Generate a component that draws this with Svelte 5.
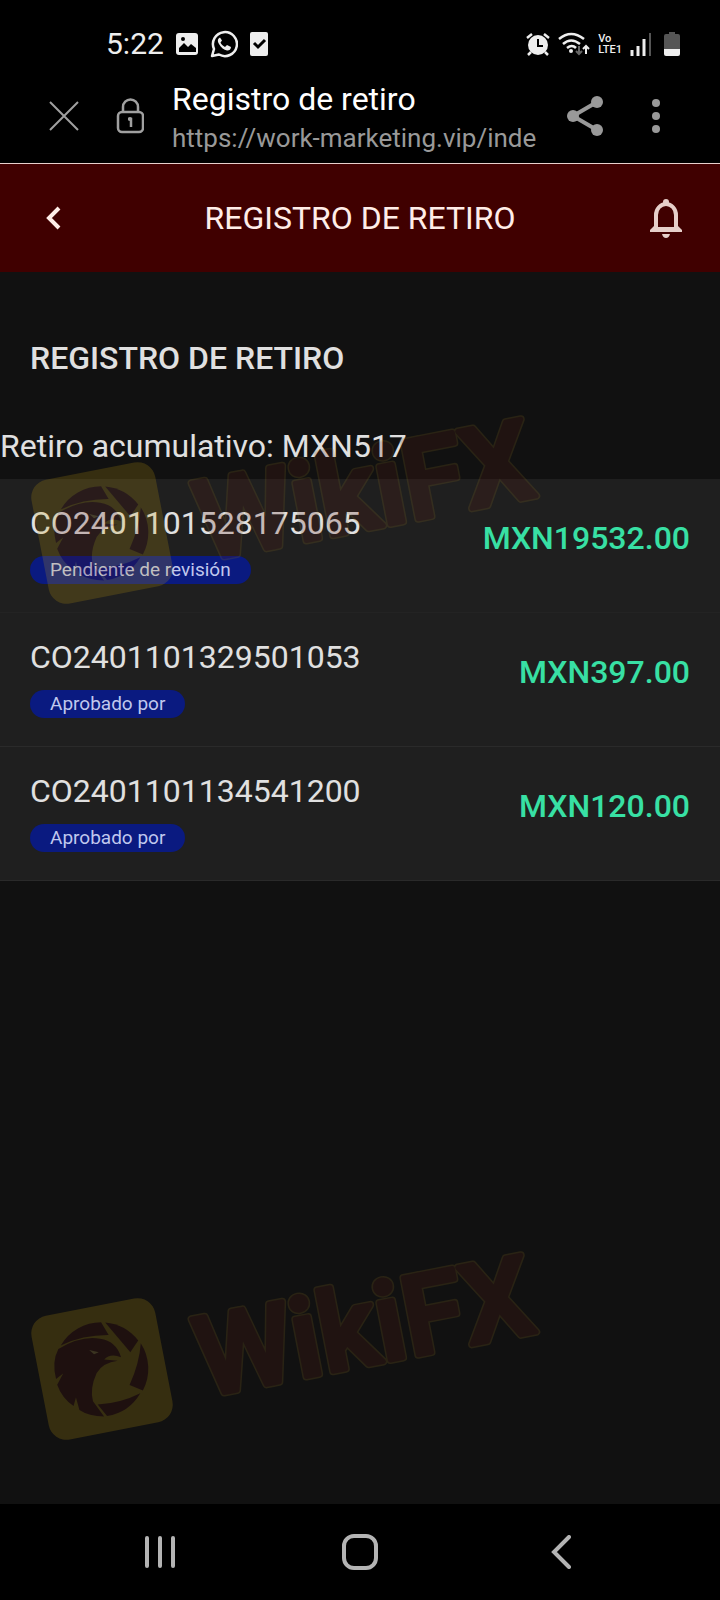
<script>
	const records = [
		{ id: 'CO2401101528175065', status: 'Pendiente de revisión', amount: 'MXN19532.00' },
		{ id: 'CO2401101329501053', status: 'Aprobado por', amount: 'MXN397.00' },
		{ id: 'CO2401101134541200', status: 'Aprobado por', amount: 'MXN120.00' }
	];
	const total = 'MXN517';
</script>

<svelte:head>
	<title>Registro de retiro</title>
</svelte:head>

{#snippet watermark(place)}
	<svg class="watermark {place}" viewBox="0 -40 600 280" aria-hidden="true">
		<g transform="rotate(-11 102 139)">
			<rect x="39" y="76" width="126" height="126" rx="18" fill="#c8a010" />
			<!-- shutter blades around the eagle -->
			<g fill="#52100c">
				<path d="M66 108 A47 47 0 0 1 110 93 L115 107 Q90 102 66 108Z" />
				<path d="M114 94 A47 47 0 0 1 143 118 L133 128Z" />
				<path d="M145 121 A47 47 0 0 1 138 168 L126 160 Q140 140 145 121Z" />
				<path d="M135 170 A47 47 0 0 1 98 186 L91 173 Q114 176 135 170Z" />
				<path d="M63 111 Q88 102 106 109 Q121 114 123 131 Q113 125 106 130 L119 134 Q104 133 96 142 Q86 156 87 169 L95 186 Q80 183 72 175 L71 162 L67 170 Q57 160 55 146 L63 136 L55 140 Q54 122 63 111Z" />
			</g>
			<path d="M93 118 l9 4 -5 1z" fill="#e0c060" />
		</g>
		<g transform="rotate(-11 206 166)">
			<text class="edge" x="204" y="166">WikiFX</text>
			<text x="204" y="166">WikiFX</text>
		</g>
	</svg>
{/snippet}

<div class="page">
	<div class="status">
		<time>5:22</time>
		<svg width="22" height="24" viewBox="0 0 22 24">
			<rect y="1" width="22" height="22" rx="3" fill="#eee" />
			<path d="M3 20v-4l5-5 4 4 3-3 5 4v4z" fill="#000" />
			<circle cx="7" cy="7" r="2" fill="#000" />
		</svg>
		<svg width="28" height="28" viewBox="0 0 28 28">
			<path d="M2 26l2-7A12 12 0 1 1 9 24.500z" fill="none" stroke="#eee" stroke-width="2.500" stroke-linejoin="round" />
			<path d="M10 7.500c-2 1-3 3-1 6.500 2 3.500 5 6 8 6.500 2 .2 4-1 4-3.500l-4-2-2 2c-2-1-4-3-4.500-4.500l1.500-2z" fill="#eee" />
		</svg>
		<svg width="18" height="24" viewBox="0 0 18 24">
			<rect width="18" height="24" rx="2" fill="#eee" />
			<path d="M4 11l4 4 7-7" fill="none" stroke="#000" stroke-width="3" />
		</svg>
		<div class="system">
			<svg width="24" height="24" viewBox="0 0 24 24">
				<circle cx="12" cy="13" r="10" fill="#eee" />
				<path d="M1 6l5-4M23 6l-5-4M5 20l-3 3M19 20l3 3" stroke="#eee" stroke-width="2.500" />
				<path d="M12 7v7h5" fill="none" stroke="#000" stroke-width="2" />
			</svg>
			<svg width="32" height="24" viewBox="0 0 32 24">
				<g fill="none" stroke="#eee" stroke-width="2.500">
					<path d="M1 7q12-10 25 0M5 12q8-7 17 0M9 16q5-4 9 0" />
					<path d="M28 22v-8M25 17l3-3 3 3" stroke-width="2" />
				</g>
				<path d="M21 14v8M18 19l3 3 3-3" fill="none" stroke="#666" stroke-width="2" />
				<circle cx="13" cy="19" r="2" fill="#eee" />
			</svg>
			<span class="volte">Vo<br />LTE1</span>
			<svg width="22" height="24" viewBox="0 0 22 24">
				<path d="M2 18v6M8 14v10M14 7v17" stroke="#eee" stroke-width="3" />
				<path d="M20 1v23" stroke="#555" stroke-width="2" />
			</svg>
			<svg class="battery" width="16" height="24" viewBox="0 0 16 24">
				<path d="M2 2h3V0h6v2h3q2 0 2 2v13H0V4q0-2 2-2z" fill="#555" />
				<path d="M0 17h16v5q0 2-2 2H2q-2 0-2-2z" fill="#eee" />
			</svg>
		</div>
	</div>

	<div class="browser">
		<button aria-label="Cerrar">
			<svg width="32" height="32" viewBox="0 0 32 32">
				<path d="M2 2l28 28M30 2L2 30" stroke="#a0a0a0" stroke-width="2" />
			</svg>
		</button>
		<button class="lock" aria-label="Seguridad">
			<svg width="28" height="36" viewBox="0 0 28 36">
				<g fill="none" stroke="#a0a0a0" stroke-width="2.500">
					<rect x="2" y="14" width="25" height="20" rx="4" />
					<path d="M7 14V9a7.500 7.500 0 0 1 15 0v5" />
					<path d="M12 21h3v8" />
				</g>
				<circle cx="14" cy="21" r="2" fill="#a0a0a0" />
			</svg>
		</button>
		<div class="address">
			<div class="name">Registro de retiro</div>
			<div class="url">https://work-marketing.vip/inde</div>
		</div>
		<button class="share" aria-label="Compartir">
			<svg width="36" height="40" viewBox="0 0 36 40">
				<path d="M30 6L6 20l24 14" fill="none" stroke="#999" stroke-width="4" />
				<g fill="#999">
					<circle cx="30" cy="6" r="6" />
					<circle cx="6" cy="20" r="6" />
					<circle cx="30" cy="34" r="6" />
				</g>
			</svg>
		</button>
		<button class="more" aria-label="Más opciones">
			<svg width="10" height="36" viewBox="0 0 10 36" fill="#999">
				<circle cx="5" cy="5" r="4" />
				<circle cx="5" cy="18" r="4" />
				<circle cx="5" cy="31" r="4" />
			</svg>
		</button>
	</div>

	<header>
		<button class="back" aria-label="Volver">
			<svg width="16" height="24" viewBox="0 0 16 24">
				<path d="M13 2L3 12l10 10" fill="none" stroke="#ffede8" stroke-width="4" />
			</svg>
		</button>
		<h1>REGISTRO DE RETIRO</h1>
		<button aria-label="Notificaciones">
			<svg width="32" height="40" viewBox="0 0 32 40">
				<g fill="#e6cfca">
					<circle cx="16" cy="4" r="3" />
					<path d="M12 36h8q-1 4-4 4t-4-4z" />
					<path d="M0 34v-2l4-4h24l4 4v2z" />
				</g>
				<path d="M6 31V17a10 11 0 0 1 20 0v14z" fill="#400000" stroke="#e6cfca" stroke-width="4" />
			</svg>
		</button>
	</header>

	<main>
		<h2>REGISTRO DE RETIRO</h2>
		<p>Retiro acumulativo: {total}</p>
		<ul>
			{#each records as record}
				<li>
					<div class="info">
						<span class="id">{record.id}</span>
						<span class="tag">{record.status}</span>
					</div>
					<strong>{record.amount}</strong>
				</li>
			{/each}
		</ul>
	</main>

	<nav>
		<button aria-label="Recientes">
			<svg width="32" height="32" viewBox="0 0 32 32">
				<path d="M3 2v28M16 2v28M29 2v28" stroke="#b4b4b4" stroke-width="4" stroke-linecap="round" />
			</svg>
		</button>
		<button aria-label="Inicio">
			<svg width="36" height="36" viewBox="0 0 36 36">
				<rect x="2" y="2" width="32" height="32" rx="10" fill="none" stroke="#b4b4b4" stroke-width="4" />
			</svg>
		</button>
		<button aria-label="Atrás">
			<svg width="20" height="34" viewBox="0 0 20 34">
				<path d="M18 2L3 17l15 15" fill="none" stroke="#b4b4b4" stroke-width="4" stroke-linecap="round" />
			</svg>
		</button>
	</nav>

	{@render watermark('upper')}
	{@render watermark('lower')}
</div>

<style>
	:global(body) {
		margin: 0;
		background: #000;
	}
	.page {
		position: relative;
		display: flex;
		flex-direction: column;
		min-height: 100vh;
		background: #111;
		color: #e0e0e0;
		font-family: Roboto, sans-serif;
		font-size: 32px;
		line-height: 40px;
	}
	svg {
		display: block;
		flex: none;
	}
	button {
		padding: 0;
		border: 0;
		background: none;
		cursor: pointer;
	}
	.status {
		display: flex;
		align-items: center;
		gap: 12px;
		height: 72px;
		padding: 16px 40px 0 106px;
		box-sizing: border-box;
		background: #000;
		color: #eee;
	}
	time {
		font-size: 30px;
	}
	.system {
		display: flex;
		align-items: center;
		gap: 8px;
		margin-left: auto;
	}
	.volte {
		font-size: 11px;
		font-weight: 500;
		line-height: 11px;
	}
	.battery {
		margin-left: 4px;
	}
	.browser {
		display: flex;
		align-items: center;
		height: 87px;
		padding: 0 59px 4px 48px;
		border-bottom: 1px solid #e8d0cc;
		background: #000;
	}
	.lock {
		margin: 0 28px 0 36px;
	}
	.address {
		flex: 1;
		min-width: 0;
		padding-top: 4px;
		white-space: nowrap;
	}
	.name {
		color: #fff;
	}
	.url {
		color: #999;
		font-size: 26px;
		line-height: 38px;
	}
	.share {
		margin: 0 48px 0 30px;
	}
	header {
		display: flex;
		align-items: center;
		justify-content: space-between;
		height: 108px;
		padding: 0 38px 0 46px;
		background: #400000;
	}
	.back {
		width: 24px;
	}
	h1,
	h2 {
		margin: 0;
		font-size: 32px;
		font-weight: 400;
	}
	h1 {
		color: #ffede8;
	}
	main {
		flex: 1;
	}
	h2 {
		padding: 66px 30px 48px;
		font-weight: 500;
	}
	p {
		margin: 0 0 13px;
	}
	ul {
		margin: 0;
		padding: 0;
		list-style: none;
		background: #1f1f1f;
	}
	li {
		display: flex;
		align-items: center;
		justify-content: space-between;
		padding: 24px 30px 28px;
		border-bottom: 1px solid #2a2a2a;
	}
	li:first-child {
		border-color: #232323;
	}
	.info {
		display: flex;
		flex-direction: column;
		align-items: flex-start;
		gap: 13px;
	}
	.tag {
		padding: 0 20px;
		border-radius: 14px;
		background: #0a1a80;
		color: #c0c8ee;
		font-size: 19px;
		line-height: 28px;
	}
	strong {
		padding-bottom: 12px;
		color: #38e0a4;
		font-weight: 500;
	}
	nav {
		display: grid;
		grid-template-columns: repeat(3, 1fr);
		justify-items: center;
		align-items: center;
		height: 96px;
		padding: 0 59px 0 60px;
		background: #000;
	}
	.watermark {
		position: absolute;
		left: 0;
		width: 600px;
		height: 280px;
		overflow: visible;
		opacity: 0.2;
		pointer-events: none;
	}
	.watermark text {
		fill: #5c1c14;
		stroke: #5c1c14;
		stroke-width: 5;
		stroke-linejoin: round;
		font-size: 110px;
		font-weight: 500;
		line-height: normal;
	}
	.watermark .edge {
		stroke: #8a6a20;
		stroke-width: 8;
	}
	.upper {
		top: 354px;
	}
	.lower {
		bottom: 130px;
	}
</style>
